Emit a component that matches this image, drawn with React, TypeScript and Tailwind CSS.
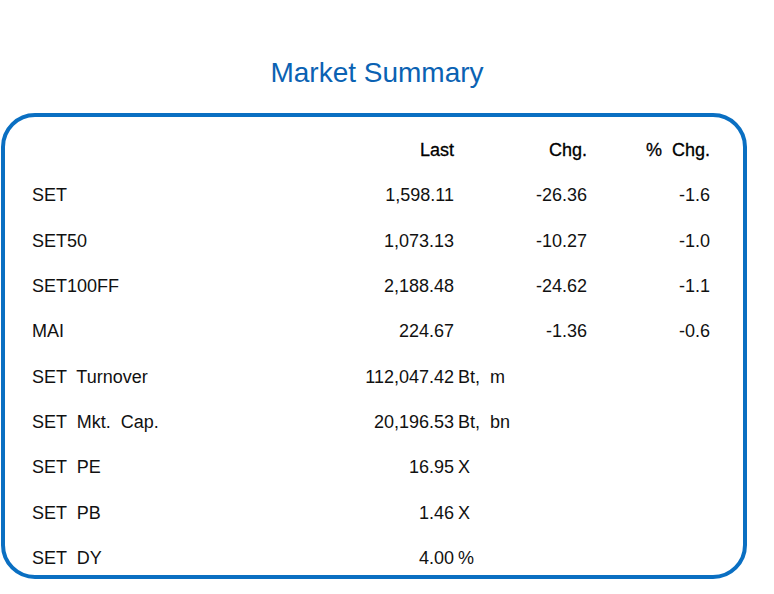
import React from "react";

type Row = {
  label: string;
  last: string;
  chg?: string;
  pct?: string;
  unit?: string;
};

const rows: Row[] = [
  { label: "SET", last: "1,598.11", chg: "-26.36", pct: "-1.6" },
  { label: "SET50", last: "1,073.13", chg: "-10.27", pct: "-1.0" },
  { label: "SET100FF", last: "2,188.48", chg: "-24.62", pct: "-1.1" },
  { label: "MAI", last: "224.67", chg: "-1.36", pct: "-0.6" },
  { label: "SET  Turnover", last: "112,047.42", unit: "Bt,  m" },
  { label: "SET  Mkt.  Cap.", last: "20,196.53", unit: "Bt,  bn" },
  { label: "SET  PE", last: "16.95", unit: "X" },
  { label: "SET  PB", last: "1.46", unit: "X" },
  { label: "SET  DY", last: "4.00", unit: "%" },
];

const cell = "h-[45.33px] leading-[45.33px] whitespace-pre";

export default function App() {
  return (
    <div className="min-h-[594px] w-[774px] bg-white font-['Liberation_Sans',Arial,sans-serif] text-[#111]">
      <h1 className="w-[754px] pt-[59px] text-center text-[28px] leading-[28px] text-[#0a62b3]">
        Market Summary
      </h1>

      <section className="mt-[26px] ml-[1px] h-[466px] w-[746px] rounded-[34px] border-4 border-[#0a6fc2] pt-[11px] pl-[27px]">
        <div className="grid grid-cols-[332px_90px_133px_123px] text-[18px]">
          <div className={cell}></div>
          <div className={`${cell} text-right text-black [-webkit-text-stroke:0.3px_#000]`}>Last</div>
          <div className={`${cell} text-right text-black [-webkit-text-stroke:0.3px_#000]`}>Chg.</div>
          <div className={`${cell} text-right text-black [-webkit-text-stroke:0.3px_#000]`}>%  Chg.</div>

          {rows.map((r) => (
            <React.Fragment key={r.label}>
              <div className={cell}>{r.label}</div>
              <div className={`${cell} text-right`}>{r.last}</div>
              {r.unit ? (
                <div className={`${cell} pl-[4px]`}>{r.unit}</div>
              ) : (
                <div className={`${cell} text-right`}>{r.chg}</div>
              )}
              <div className={`${cell} text-right`}>{r.pct ?? ""}</div>
            </React.Fragment>
          ))}
        </div>
      </section>
    </div>
  );
}
